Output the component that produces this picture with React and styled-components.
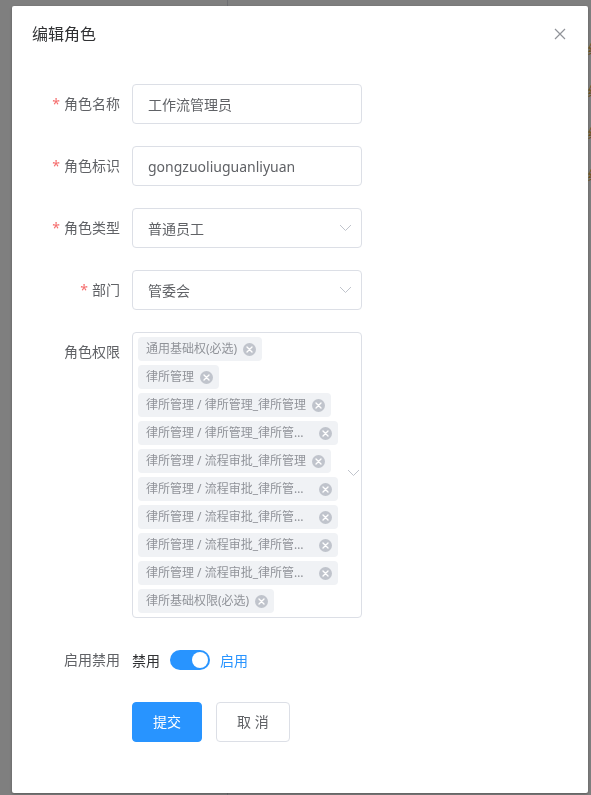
import React from "react";
import styled, { createGlobalStyle } from "styled-components";

const GlobalStyle = createGlobalStyle`
  html, body { margin: 0; padding: 0; }
  body {
    font-family: "Noto Sans", "Noto Sans CJK SC", sans-serif;
    font-size: 14px;
    color: #606266;
    background: #fff;
  }
  * { box-sizing: border-box; }
`;

const BLUE = "#2894ff";

/* ---------- background page (under the mask) ---------- */
const Page = styled.div`
  display: grid;
  grid-template-columns: 228px 1fr;
  height: 100vh;
  overflow: hidden;
  background: #fff;
`;
const Sidebar = styled.div`
  border-right: 1px solid #dcdfe6;
`;
const MainArea = styled.div`
  padding-top: 27px;
`;
const BgRow = styled.div`
  height: 42px;
  display: flex;
  align-items: center;
  padding-left: 360px;
  white-space: nowrap;
`;
const BgLink = styled.span`
  color: #e6a23c;
  font-size: 13px;
`;

const Mask = styled.div`
  position: fixed;
  inset: 0;
  background: rgba(0, 0, 0, 0.5);
`;

const DialogWrapper = styled.div`
  position: fixed;
  inset: 0;
  overflow: hidden;
`;

/* ---------- dialog ---------- */
const Dialog = styled.div`
  margin: 6px 0 0 12px;
  width: 576px;
  background: #fff;
  border-radius: 2px;
  box-shadow: 0 1px 3px rgba(0, 0, 0, 0.3);
`;
const Header = styled.div`
  display: flex;
  justify-content: space-between;
  align-items: center;
  padding: 16px 20px 10px;
`;
const Title = styled.span`
  font-size: 16px;
  line-height: 24px;
  color: #303133;
`;
const CloseBtn = styled.button`
  border: 0;
  background: transparent;
  padding: 0;
  margin-right: 0;
  width: 16px;
  height: 16px;
  display: flex;
  align-items: center;
  justify-content: center;
  cursor: pointer;
`;
const Body = styled.div`
  padding: 28px 20px 29px;
`;

const FormItem = styled.div`
  display: flex;
  align-items: flex-start;
  margin-bottom: ${(p) => p.$mb ?? 22}px;
`;
const Label = styled.label`
  flex: none;
  width: 100px;
  padding-right: 12px;
  text-align: right;
  line-height: 40px;
  font-size: 14px;
  color: #606266;
`;
const Star = styled.span`
  color: #f56c6c;
  margin-right: 4px;
`;
const Content = styled.div`
  flex: none;
  display: flex;
  align-items: center;
  min-height: 40px;
`;

const Input = styled.div`
  width: 230px;
  height: 40px;
  border: 1px solid #dcdfe6;
  border-radius: 4px;
  padding: 0 15px;
  display: flex;
  align-items: center;
  justify-content: space-between;
  color: #606266;
  font-size: 14px;
  background: #fff;
`;
const Arrow = styled.span`
  display: flex;
  align-items: center;
  margin-right: -6px;
`;

const MultiBox = styled.div`
  width: 230px;
  border: 1px solid #dcdfe6;
  border-radius: 4px;
  padding: 2px 0 2px 5px;
  display: flex;
  align-items: center;
`;
const TagList = styled.div`
  flex: 1;
  display: flex;
  flex-direction: column;
  align-items: flex-start;
`;
const Tag = styled.span`
  display: inline-flex;
  align-items: center;
  max-width: 200px;
  height: 24px;
  margin: 2px 0;
  padding: 0 6px 0 8px;
  background: #f0f2f5;
  border-radius: 4px;
  color: #909399;
  font-size: 12px;
  white-space: nowrap;
`;
const TagText = styled.span`
  min-width: 0;
  overflow: hidden;
  text-overflow: ellipsis;
  line-height: 24px;
`;
const TagClose = styled.span`
  flex: none;
  margin-left: 6px;
  width: 13px;
  height: 13px;
  border-radius: 50%;
  background: #c0c4cc;
  display: flex;
  align-items: center;
  justify-content: center;
`;
const MultiArrow = styled.span`
  flex: none;
  width: 30px;
  display: flex;
  justify-content: center;
  margin-top: -4px;
`;

const SwitchText = styled.span`
  font-size: 14px;
  color: ${(p) => (p.$active ? BLUE : "#303133")};
  margin: ${(p) => (p.$side === "left" ? "0 10px 0 0" : "0 0 0 10px")};
`;
const SwitchTrack = styled.span`
  width: 40px;
  height: 20px;
  border-radius: 10px;
  background: ${BLUE};
  display: flex;
  align-items: center;
  justify-content: flex-end;
  padding: 0 2px;
`;
const SwitchKnob = styled.span`
  width: 16px;
  height: 16px;
  border-radius: 50%;
  background: #fff;
`;

const Buttons = styled.div`
  display: flex;
  gap: 14px;
`;
const Button = styled.button`
  font-family: inherit;
  font-size: 14px;
  line-height: 14px;
  height: 40px;
  padding: 0 20px;
  border-radius: 4px;
  border: 1px solid ${(p) => (p.$primary ? BLUE : "#dcdfe6")};
  background: ${(p) => (p.$primary ? BLUE : "#fff")};
  color: ${(p) => (p.$primary ? "#fff" : "#606266")};
  cursor: pointer;
  white-space: pre;
`;

const Chevron = () => (
  <svg width="13" height="8" viewBox="0 0 13 8">
    <polyline points="1,1 6.5,6.5 12,1" fill="none" stroke="#c0c4cc" strokeWidth="1" />
  </svg>
);

const CloseIcon = () => (
  <svg width="12" height="12" viewBox="0 0 12 12">
    <path d="M1 1 L11 11 M11 1 L1 11" stroke="#909399" strokeWidth="1.2" />
  </svg>
);

const TagX = () => (
  <svg width="7" height="7" viewBox="0 0 7 7">
    <path d="M1 1 L6 6 M6 1 L1 6" stroke="#fff" strokeWidth="1.4" strokeLinecap="round" />
  </svg>
);

const tags = [
  "通用基础权(必选)",
  "律所管理",
  "律所管理 / 律所管理_律所管理",
  "律所管理 / 律所管理_律所管理员",
  "律所管理 / 流程审批_律所管理",
  "律所管理 / 流程审批_律所管理员",
  "律所管理 / 流程审批_律所管理者",
  "律所管理 / 流程审批_律所管理部",
  "律所管理 / 流程审批_律所管理组",
  "律所基础权限(必选)",
];

function Field({ label, required, children, mb }) {
  return (
    <FormItem $mb={mb}>
      <Label>
        {required && <Star>*</Star>}
        {label}
      </Label>
      <Content>{children}</Content>
    </FormItem>
  );
}

export default function App() {
  return (
    <>
      <GlobalStyle />
      <Page>
        <Sidebar />
        <MainArea>
          {[0, 1, 2, 3].map((i) => (
            <BgRow key={i}>
              <BgLink>编辑</BgLink>
            </BgRow>
          ))}
        </MainArea>
      </Page>
      <Mask />
      <DialogWrapper>
        <Dialog>
          <Header>
            <Title>编辑角色</Title>
            <CloseBtn aria-label="关闭">
              <CloseIcon />
            </CloseBtn>
          </Header>
          <Body>
            <Field label="角色名称" required>
              <Input>工作流管理员</Input>
            </Field>
            <Field label="角色标识" required>
              <Input>gongzuoliuguanliyuan</Input>
            </Field>
            <Field label="角色类型" required>
              <Input>
                普通员工
                <Arrow>
                  <Chevron />
                </Arrow>
              </Input>
            </Field>
            <Field label="部门" required>
              <Input>
                管委会
                <Arrow>
                  <Chevron />
                </Arrow>
              </Input>
            </Field>
            <Field label="角色权限">
              <MultiBox>
                <TagList>
                  {tags.map((t, i) => (
                    <Tag key={i}>
                      <TagText>{t}</TagText>
                      <TagClose>
                        <TagX />
                      </TagClose>
                    </Tag>
                  ))}
                </TagList>
                <MultiArrow>
                  <Chevron />
                </MultiArrow>
              </MultiBox>
            </Field>
            <Field label="启用禁用">
              <SwitchText $side="left">禁用</SwitchText>
              <SwitchTrack>
                <SwitchKnob />
              </SwitchTrack>
              <SwitchText $side="right" $active>
                启用
              </SwitchText>
            </Field>
            <Field label="">
              <Buttons>
                <Button $primary>提交</Button>
                <Button>取 消</Button>
              </Buttons>
            </Field>
          </Body>
        </Dialog>
      </DialogWrapper>
    </>
  );
}
